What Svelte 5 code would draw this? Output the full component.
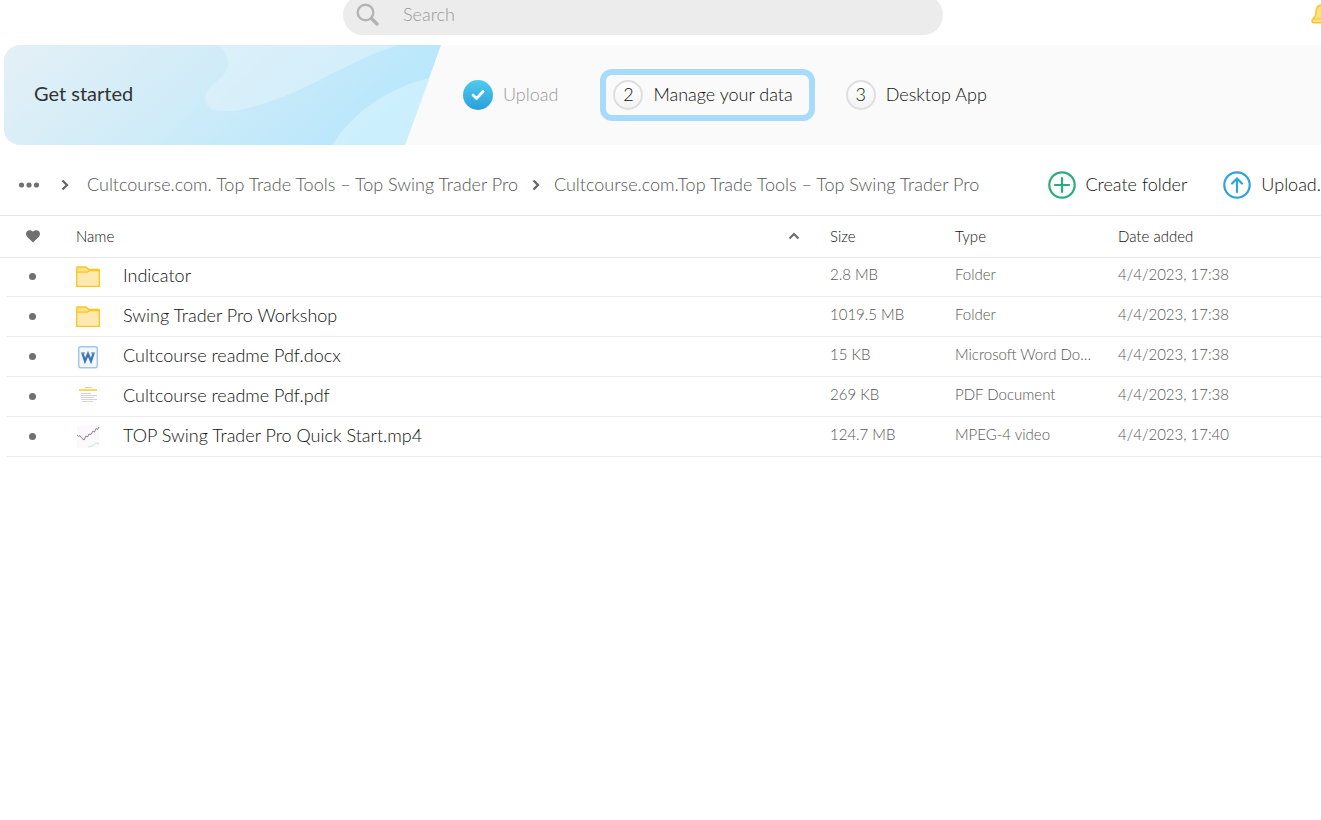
<script lang="ts">
  type Kind = "folder" | "word" | "pdf" | "video";

  type Item = {
    name: string;
    kind: Kind;
    size: string;
    type: string;
    date: string;
  };

  const items: Item[] = [
    { name: "Indicator", kind: "folder", size: "2.8 MB", type: "Folder", date: "4/4/2023, 17:38" },
    { name: "Swing Trader Pro Workshop", kind: "folder", size: "1019.5 MB", type: "Folder", date: "4/4/2023, 17:38" },
    { name: "Cultcourse readme Pdf.docx", kind: "word", size: "15 KB", type: "Microsoft Word Document", date: "4/4/2023, 17:38" },
    { name: "Cultcourse readme Pdf.pdf", kind: "pdf", size: "269 KB", type: "PDF Document", date: "4/4/2023, 17:38" },
    { name: "TOP Swing Trader Pro Quick Start.mp4", kind: "video", size: "124.7 MB", type: "MPEG-4 video", date: "4/4/2023, 17:40" },
  ];

  const crumbs = [
    "Cultcourse.com. Top Trade Tools – Top Swing Trader Pro",
    "Cultcourse.com.Top Trade Tools – Top Swing Trader Pro",
  ];

  let query = $state("");
  let ascending = $state(true);
  let favourites = $state<string[]>([]);

  const rows = $derived(ascending ? items : [...items].reverse());

  function toggleFavourite(name: string) {
    if (favourites.includes(name)) {
      favourites = favourites.filter((n) => n !== name);
    } else {
      favourites = [...favourites, name];
    }
  }
</script>

{#snippet heart()}
  <svg width="14" height="13" viewBox="0 0 14 13" aria-hidden="true">
    <path
      d="M7 12.6 1.3 6.9C-.4 5.2-.4 2.6 1.1 1.2 2.7-.3 5.3-.2 7 1.7 8.7-.2 11.3-.3 12.9 1.2c1.5 1.4 1.5 4-.2 5.7z"
      fill="#707070"
    />
  </svg>
{/snippet}

{#snippet chevron()}
  <svg width="8" height="12" viewBox="0 0 8 12" aria-hidden="true">
    <path d="M1.5 1.5 6 6 1.5 10.5" fill="none" stroke="#666" stroke-width="2.3" />
  </svg>
{/snippet}

{#snippet fileIcon(kind: Kind)}
  <svg class="file-icon" width="24" height="24" viewBox="0 0 24 24" aria-hidden="true">
    {#if kind === "folder"}
      <path
        d="M.7 21.300V2.700q0-.7.7-.7h8.400l3 2.300h9.800q.7 0 .7.700v16.300z"
        fill="#ffdf8c"
        stroke="#ffc61a"
        stroke-width="1.300"
      />
      <path d="M.7 7.200h10.600l2-1.500h10v15.600H.7z" fill="#ffe9b3" stroke="#ffc61a" stroke-width="1.300" />
    {:else if kind === "word"}
      <rect x="2.700" y="1.700" width="18.600" height="21" rx="2" fill="#f2f7fc" stroke="#a3c4e4" stroke-width="1.400" />
      <path
        d="M6.500 8.500 9 16 12 9 15 16 17.500 8.500"
        fill="none"
        stroke="#3f74b5"
        stroke-width="2.300"
      />
      <path d="M5 8h4M15 8h4" stroke="#3f74b5" stroke-width="1.200" />
    {:else if kind === "pdf"}
      <path d="M9 2.500h7" stroke="#f5c0ba" stroke-width="1" />
      <path d="M3 5h18" stroke="#fbd75a" stroke-width="2" />
      <path d="M5 8.500h10M5 10.500h16M5 12.500h13M5 14.500h16" stroke="#d4d4d4" stroke-width="1" />
      <path d="M6 16.500h11" stroke="#f0cdc3" stroke-width="1" />
    {:else}
      <path d="M1 1h22v22H1z" fill="#fcf8fd" />
      <path
        d="m1 10 1.500 1.500L4 10.500l2 3 2 1.500 2-4 1.500 1L13 9l2 .5L17 6l1.500 1L20 3.500l1.500 1L23 2"
        fill="none"
        stroke="#85858b"
        stroke-width="1"
      />
      <path d="m12 22 4-1 4-3 3 1" fill="none" stroke="#c5edc3" stroke-width="1" />
    {/if}
  </svg>
{/snippet}

<div class="app">
  <header>
    <label class="search">
      <svg width="24" height="24" viewBox="0 0 24 24" fill="none" stroke="#b3b3b3" aria-hidden="true">
        <circle cx="9.500" cy="9.500" r="7.800" stroke-width="2.400" />
        <path d="m15.500 15.500 5.500 5.500" stroke-width="3.400" stroke-linecap="round" />
      </svg>
      <input type="text" placeholder="Search" aria-label="Search" bind:value={query} />
    </label>
    <button class="bell" aria-label="Notifications">
      <svg width="22" height="22" viewBox="0 0 22 22" aria-hidden="true">
        <path
          d="M1 17q0-1.500 1.600-3Q5 12.500 5 8.500C5 4 7 1 11 1s6 3 6 7.500q0 4 2.400 5.500 1.600 1.500 1.600 3 0 1.700-2 1.700H3q-2 0-2-1.700z"
          fill="#ffe085"
          stroke="#f7c331"
          stroke-width="1.500"
        />
        <path d="M2 15h18" stroke="#f7c331" />
      </svg>
    </button>
  </header>

  <section class="banner">
    <div class="intro">
      <svg viewBox="0 0 437 100" preserveAspectRatio="none" aria-hidden="true">
        <defs>
          <linearGradient id="sky" x1="0" y1="0" x2="1" y2="0.25">
            <stop offset="0" stop-color="#e4f0f6" />
            <stop offset="0.5" stop-color="#d0ecf8" />
            <stop offset="1" stop-color="#b8e7fc" />
          </linearGradient>
        </defs>
        <path d="M0 0h437l-36 100H0z" fill="url(#sky)" />
        <path
          d="M214 0C224 7 227 20 220 29 212 38 201 43 201 54 202 66 217 68 235 65 300 52 340 16 395 0z"
          fill="#e6f4fc"
          fill-opacity="0.500"
        />
        <path d="M328 100C349 67 385 42 426 33l-25 67z" fill="#d3f1ff" fill-opacity="0.750" />
      </svg>
      <h1>Get started</h1>
    </div>
    <ol class="steps">
      <li>
        <button class="step done">
          <span class="badge">
            <svg width="14" height="12" viewBox="0 0 14 12" aria-hidden="true">
              <path
                d="m2 6 3.500 3.500L12 2.500"
                fill="none"
                stroke="#fff"
                stroke-width="2.800"
                stroke-linecap="round"
                stroke-linejoin="round"
              />
            </svg>
          </span>
          <span class="label">Upload</span>
        </button>
      </li>
      <li>
        <button class="step current" aria-current="step">
          <span class="badge"><span class="label">2</span></span>
          <span class="label">Manage your data</span>
        </button>
      </li>
      <li>
        <button class="step">
          <span class="badge"><span class="label">3</span></span>
          <span class="label">Desktop App</span>
        </button>
      </li>
    </ol>
  </section>

  <div class="toolbar">
    <nav aria-label="Breadcrumb">
      <button class="more" aria-label="Show parent folders">
        <svg width="20" height="6" viewBox="0 0 20 6" fill="#707070" aria-hidden="true">
          <circle cx="2.500" cy="3" r="2.600" />
          <circle cx="10" cy="3" r="2.600" />
          <circle cx="17.500" cy="3" r="2.600" />
        </svg>
      </button>
      {#each crumbs as crumb}
        {@render chevron()}
        <a href="#folder">{crumb}</a>
      {/each}
    </nav>
    <div class="actions">
      <button>
        <svg width="28" height="28" viewBox="0 0 28 28" fill="none" stroke="#27ae7a" stroke-width="2.200" aria-hidden="true">
          <circle cx="14" cy="14" r="12.700" />
          <path d="M14 7v14M7 14h14" stroke-linecap="round" />
        </svg>
        <span class="label">Create folder</span>
      </button>
      <button>
        <svg width="28" height="28" viewBox="0 0 28 28" fill="none" stroke="#2ea3dd" stroke-width="2.200" aria-hidden="true">
          <circle cx="14" cy="14" r="12.700" />
          <path d="M14 21V8M9 12.500 14 7.500l5 5" stroke-linecap="round" />
        </svg>
        <span class="label">Upload.</span>
      </button>
    </div>
  </div>

  <table>
    <thead>
      <tr>
        <th class="fav" aria-label="Favourite">{@render heart()}</th>
        <th class="name">
          <button class="sort" onclick={() => (ascending = !ascending)}>
            Name
            <svg class:down={!ascending} width="12" height="8" viewBox="0 0 12 8" aria-hidden="true">
              <path d="M1.500 6.500 6 2l4.500 4.500" fill="none" stroke="#707070" stroke-width="2.200" />
            </svg>
          </button>
        </th>
        <th class="size">Size</th>
        <th class="type">Type</th>
        <th class="date">Date added</th>
      </tr>
    </thead>
    <tbody>
      {#each rows as item (item.name)}
        <tr>
          <td class="fav">
            <button
              aria-label="Favourite {item.name}"
              aria-pressed={favourites.includes(item.name)}
              onclick={() => toggleFavourite(item.name)}
            >
              {#if favourites.includes(item.name)}
                {@render heart()}
              {:else}
                <span class="dot"></span>
              {/if}
            </button>
          </td>
          <td class="name">
            <div class="file">
              {@render fileIcon(item.kind)}
              <span>{item.name}</span>
            </div>
          </td>
          <td>{item.size}</td>
          <td class="type">{item.type}</td>
          <td>{item.date}</td>
        </tr>
      {/each}
    </tbody>
  </table>
</div>

<style>
  :global(body) {
    background: #fff;
  }

  .app {
    overflow: hidden;
    color: #111;
    font: 300 18px/24px Lato, sans-serif;
  }

  button {
    padding: 0;
    border: 0;
    background: none;
    color: inherit;
    font: inherit;
    cursor: pointer;
  }

  svg {
    display: block;
    flex: none;
  }

  header {
    display: flex;
    align-items: center;
    height: 40px;
    margin: -5px -12px 10px 343px;
  }

  .search {
    display: flex;
    align-items: center;
    gap: 23px;
    box-sizing: border-box;
    width: 600px;
    height: 40px;
    padding: 0 13px;
    border-radius: 20px;
    background: #ececec;
  }

  .search input {
    flex: 1;
    min-width: 0;
    padding: 0 0 2px;
    border: 0;
    outline: none;
    background: none;
    color: #111;
    font: inherit;
  }

  .search input::placeholder {
    color: #999;
    opacity: 1;
  }

  .bell {
    margin-left: auto;
  }

  .banner {
    display: flex;
    height: 100px;
    margin-left: 4px;
    border-radius: 16px 0 0 16px;
    background: #fafafa;
    overflow: hidden;
  }

  .intro {
    display: grid;
    flex: none;
    width: 437px;
  }

  .intro svg,
  .intro h1 {
    grid-area: 1 / 1;
  }

  .intro svg {
    width: 100%;
    height: 100%;
  }

  .intro h1 {
    align-self: center;
    margin: 0;
    padding: 0 0 4px 30px;
    color: #333;
    font-size: 20px;
    font-weight: 400;
    z-index: 1;
  }

  .label {
    padding-bottom: 2px;
  }

  .steps {
    display: flex;
    align-items: center;
    gap: 25px;
    margin: 0;
    padding: 0 0 0 16px;
    list-style: none;
  }

  .step {
    display: flex;
    align-items: center;
    gap: 10px;
    padding: 5px 17px 5px 6px;
    white-space: nowrap;
  }

  .step.done {
    color: #999;
  }

  .step.current {
    padding: 5px 16px 5px 7px;
    border: 6px solid #a8daf9;
    border-radius: 12px;
  }

  .badge {
    display: flex;
    align-items: center;
    justify-content: center;
    box-sizing: border-box;
    width: 30px;
    height: 30px;
    border: 2px solid #dedede;
    border-radius: 50%;
    background: linear-gradient(#fff, #f3f3f3);
  }

  .done .badge {
    border: 0;
    background: linear-gradient(#4ecbee, #2a9fdd);
  }

  .toolbar {
    display: flex;
    align-items: center;
    justify-content: space-between;
    height: 61px;
    padding: 9px 0 0 19px;
    border-bottom: 1px solid #e6e6e6;
    white-space: nowrap;
  }

  nav {
    display: flex;
    align-items: center;
    gap: 14px;
  }

  nav a {
    padding-bottom: 2px;
    color: #555;
    text-decoration: none;
  }

  nav a:first-of-type {
    margin-left: 4px;
  }

  .more {
    margin-right: 8px;
  }

  .actions {
    display: flex;
    gap: 36px;
  }

  .actions button {
    display: flex;
    align-items: center;
    gap: 10px;
  }

  table {
    width: calc(100% - 7px);
    margin-left: 7px;
    border-spacing: 0;
    table-layout: fixed;
    font-size: 15px;
  }

  /* the head rule runs to the window edge, the row rules stop short of it */
  thead tr {
    box-shadow:
      0 1px 0 #e6e6e6,
      -7px 0 0 #fff,
      -7px 1px 0 #e6e6e6;
  }

  th {
    height: 39px;
    padding: 0 7px 2px 16px;
    font-weight: 300;
    text-align: left;
  }

  td {
    height: 34px;
    padding: 0 7px 5px 16px;
    border-bottom: 1px solid #ebebeb;
    color: #555;
  }

  th.name,
  td.name {
    padding-left: 18px;
  }

  td.name {
    height: 39px;
    padding-bottom: 0;
  }

  th.fav,
  td.fav {
    width: 51px;
    padding: 0;
  }

  .fav svg,
  .fav button {
    margin: 0 auto;
  }

  .fav button {
    display: flex;
    align-items: center;
    justify-content: center;
    width: 24px;
    height: 24px;
  }

  .dot {
    width: 7px;
    height: 7px;
    border-radius: 50%;
    background: #707070;
  }

  .sort {
    display: flex;
    align-items: center;
    justify-content: space-between;
    width: 100%;
    padding-right: 7px;
  }

  .down {
    transform: rotate(180deg);
  }

  .file {
    display: flex;
    align-items: center;
    gap: 23px;
    color: #111;
    font-size: 18px;
  }

  .file span {
    padding-bottom: 4px;
  }

  .size {
    width: 102px;
  }

  th.type {
    width: 140px;
  }

  th.date {
    width: 196px;
  }

  td.type {
    overflow: hidden;
    text-overflow: ellipsis;
    white-space: nowrap;
  }
</style>
